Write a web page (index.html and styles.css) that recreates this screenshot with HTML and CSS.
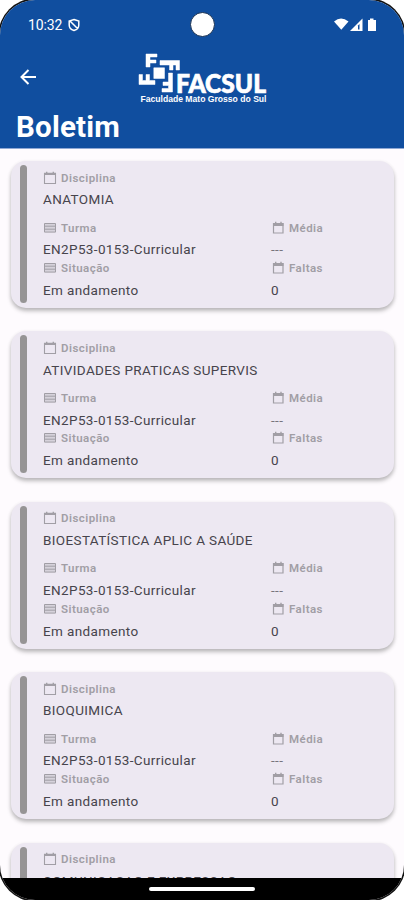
FILE: index.html
```
<!DOCTYPE html>
<html lang="pt-BR">
<head>
<meta charset="utf-8">
<title>Boletim</title>
<link rel="stylesheet" href="styles.css">
</head>
<body>
<svg class="defs" width="0" height="0">
  <symbol id="cal" viewBox="0 0 14 14"><path d="M1.500 2.500h11v10h-11z" fill="none" stroke="currentColor" stroke-width="1.100"/><path d="M1 1.800h12v2.200H1zM3 .7h1.400v2H3zM9.600 .7H11v2H9.600z" fill="currentColor"/></symbol>
  <symbol id="cal-small" viewBox="0 0 14 14"><path d="M2.500 2.500h9.500v9.500H2.500z" fill="none" stroke="currentColor" stroke-width="1.200"/><path d="M2 2h10.500v3H2zM4 .8h1.400v2H4zM9.300 .8h1.400v2H9.300z" fill="currentColor"/></symbol>
  <symbol id="list" viewBox="0 0 14 14"><path d="M1.500 2.500h11v8.600h-11z" fill="currentColor" fill-opacity=".3" stroke="currentColor" stroke-width="1"/><path d="M2 5.200h10M2 8.200h10" stroke="currentColor" stroke-width="1"/></symbol>
</svg>
<div class="phone">
  <header class="top">
    <div class="status">
      <span class="time">10:32</span>
      <svg class="shield" viewBox="0 0 12 14" fill="none" stroke="#fff" stroke-width="1.500"><path d="M6 1.500 10.800 3v4c0 3-2 4.700-4.800 5.500C3.200 11.700 1.200 10 1.200 7V3zM2.500 3.500l7 7"/></svg>
      <span class="camera"></span>
      <svg class="signals" viewBox="0 0 44 16" fill="#fff"><path d="M0 4.500Q7-1.500 14.500 4.500L7.300 12.800z"/><path d="M16 14 28.500 1.500V14z"/><path d="M25.500 7v5.500H24V8.500z" fill="#104e9f"/><path d="M36 1.500h3.500V3H42v11h-8V3h2z"/></svg>
    </div>
    <div class="brand">
      <svg class="back" viewBox="0 0 16 16" fill="none" stroke="#fff" stroke-width="2"><path d="M16 8H1.500M8.500 1 1.500 8l7 7"/></svg>
      <svg class="logo" viewBox="0 0 130 54" fill="#fff">
        <g class="mark">
          <path d="M8 2h11v3h-7v3h6v3h-6v4H8z"/>
          <path d="M22 8.500h19.500V18H38v-5h-3v5h-3.500v-5H22z"/>
          <path d="M15.800 15.800h10.700v10.700H15.800z"/>
          <path d="M1 22.500h3.500v6h3.500v-6h3.500v6H17v4H1z"/>
          <path d="M30.500 21h4v19H24v-3.500h6.500v-3H25V30h5.500z"/>
        </g>
        <text class="name" x="38" y="40.500" textLength="90" lengthAdjust="spacingAndGlyphs">FACSUL</text>
        <text class="sub" x="2.500" y="49.500" textLength="126" lengthAdjust="spacingAndGlyphs">Faculdade Mato Grosso do Sul</text>
      </svg>
    </div>
    <h1>Boletim</h1>
  </header>
  <main class="cards" id="cards"></main>
  <footer class="nav"><span class="pill"></span></footer>
</div>
<script src="app.js"></script>
</body>
</html>
```
FILE: app.js
```
const subjects = ["ANATOMIA", "ATIVIDADES PRATICAS SUPERVIS", "BIOESTATÍSTICA APLIC A SAÚDE", "BIOQUIMICA", "COMUNICACAO E EXPRESSAO"];
const label = (icon, text) =>
  `<div class="label"><svg class="ico"><use href="#${icon}"/></svg><span>${text}</span></div>`;
document.getElementById("cards").innerHTML = subjects.map(name => `
  <article class="card">
    <span class="stripe"></span>
    <div class="body">
      <div class="subject">${label("cal", "Disciplina")}<div class="value">${name}</div></div>
      <div class="grid">
        <div>${label("list", "Turma")}<div class="value">EN2P53-0153-Curricular</div></div>
        <div>${label("cal-small", "Média")}<div class="value dash">---</div></div>
        <div>${label("list", "Situação")}<div class="value">Em andamento</div></div>
        <div>${label("cal-small", "Faltas")}<div class="value">0</div></div>
      </div>
    </div>
  </article>`).join("");
```
FILE: styles.css
```
* { box-sizing: border-box; }
html { background: #fff; }
body { margin: 0; font-family: Roboto, "Liberation Sans", sans-serif; }
.defs { position: absolute; }
.phone {
  width: 404px; height: 900px; overflow: hidden;
  display: flex; flex-direction: column;
  border-radius: 35px; background: #fefbfe;
  box-shadow: 0 0 0 1.5px #111;
}
.top { height: 149px; flex: none; background: #104e9f; color: #fff; border-bottom: 1px solid #8fa8d4; }
.status { position: relative; height: 50px; display: flex; align-items: center; padding: 0 26px 0 28px; }
.time { font-size: 14px; font-weight: 450; letter-spacing: -.1px; }
.shield { width: 12px; height: 14px; margin-left: 6px; }
.camera { position: absolute; left: 190px; top: 12px; width: 25px; height: 25px; border-radius: 50%; background: #fff; border: 1px solid #173052; }
.signals { width: 44px; height: 16px; margin-left: auto; }
.brand { height: 56px; display: flex; padding-left: 20px; }
.back { width: 16px; height: 16px; margin-top: 19px; }
.logo { width: 130px; height: 54px; margin: 2px 0 0 102px; }
.mark { stroke: #fff; stroke-width: .5px; }
.name { font: 900 26px Lato, sans-serif; stroke: #fff; stroke-width: .7px; }
.sub { font: 700 8.500px "Liberation Sans", sans-serif; }
h1 { margin: 0; padding-left: 16px; font-size: 29.500px; line-height: 43px; font-weight: 700; letter-spacing: .2px; }
.cards { flex: 1; min-height: 0; overflow: hidden; padding: 12px 10px 0 11px; }
.card {
  height: 147px; margin-bottom: 23.400px; display: flex;
  border-radius: 15px; background: #ede8f2;
  box-shadow: 0 3px 4px rgba(0,0,0,.25), 0 1px 4px rgba(0,0,0,.06);
}
.stripe { width: 7px; height: 138px; margin: 4px 0 0 9px; border-radius: 4px; background: #969495; }
.body { flex: 1; padding: 7.300px 0 0 16px; }
.subject { margin-bottom: 9.500px; }
.grid { display: grid; grid-template-columns: 228px 1fr; }
.label { height: 18.500px; margin-bottom: 3.500px; display: flex; align-items: center; gap: 4px; color: #a19ea5; font-size: 11.500px; font-weight: 600; letter-spacing: .45px; }
.ico { width: 14px; height: 14px; }
.value { height: 18.500px; line-height: 18.500px; font-size: 13.500px; letter-spacing: .37px; color: #47444c; white-space: nowrap; }
.dash { color: #77747c; }
.nav { height: 22px; flex: none; background: #000; display: flex; justify-content: center; padding-top: 9px; }
.pill { width: 106px; height: 4px; border-radius: 2px; background: #fff; }
```
